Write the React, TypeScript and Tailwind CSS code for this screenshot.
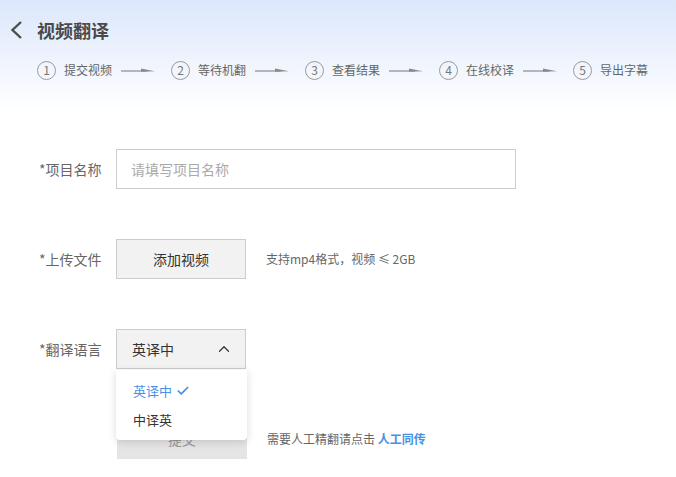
import { Check, ChevronUp } from 'lucide-react';

const steps = ['提交视频', '等待机翻', '查看结果', '在线校译', '导出字幕'];

function StepArrow() {
  return (
    <svg width="34" height="8" viewBox="0 0 34 8" className="shrink-0" aria-hidden="true">
      <line x1="0" y1="5" x2="26" y2="5" stroke="#8a8a8a" strokeWidth="1.2" />
      <polygon points="20,2.5 34,5.2 20,5.8" fill="#8a8a8a" />
    </svg>
  );
}

function Label({ children }: { children: React.ReactNode }) {
  return <div className="w-[77px] shrink-0 text-[14px] text-[#666]">{children}</div>;
}

export default function App() {
  return (
    <div
      className="w-[676px] h-[477px] overflow-hidden bg-white"
      style={{ fontFamily: '"Noto Sans CJK SC", "Noto Sans", sans-serif' }}
    >
      {/* Header */}
      <div className="h-[110px] bg-gradient-to-b from-[#dbe7fb] to-white pt-[20px]">
        <div className="flex items-center h-[20px]">
          <svg width="14" height="20" viewBox="0 0 14 20" className="ml-[9px]" aria-hidden="true">
            <polyline points="12,2 3.5,10 12,18" fill="none" stroke="#4d4d4d" strokeWidth="2.4" />
          </svg>
          <h1 className="ml-[14px] text-[18px] leading-[20px] font-bold text-[#4a4a4a]">视频翻译</h1>
        </div>
        <div className="flex items-center h-[20px] mt-[20px] ml-[37px]">
          {steps.map((s, i) => (
            <div key={s} className="flex items-center">
              <div className="w-[19px] h-[19px] rounded-full border border-[#9a9a9a] flex items-center justify-center text-[12px] leading-none text-[#777]">
                {i + 1}
              </div>
              <span className="ml-[8px] text-[12px] text-[#666] whitespace-nowrap">{s}</span>
              {i < steps.length - 1 && (
                <div className="flex items-center ml-[9px] mr-[16px]">
                  <StepArrow />
                </div>
              )}
            </div>
          ))}
        </div>
      </div>

      {/* Form */}
      <div className="pt-[39px] pl-[39px] flex flex-col gap-[50px]">
        <div className="flex items-center h-[40px]">
          <Label>*项目名称</Label>
          <input
            className="w-[400px] h-[40px] border border-[#ccc] px-[14px] text-[14px] text-[#333] placeholder:text-[#aaa] outline-none"
            placeholder="请填写项目名称"
          />
        </div>

        <div className="flex items-center h-[40px]">
          <Label>*上传文件</Label>
          <button className="w-[130px] h-[40px] bg-[#f2f2f2] border border-[#ccc] text-[14px] text-[#333]">
            添加视频
          </button>
          <span className="ml-[20px] text-[12px] text-[#666]">支持mp4格式，视频 ≤ 2GB</span>
        </div>

        <div className="flex items-center h-[40px]">
          <Label>*翻译语言</Label>
          <div className="relative">
            <div className="w-[130px] h-[40px] bg-[#f2f2f2] border border-[#ccc] flex items-center justify-between pl-[15px] pr-[12px] text-[14px] text-[#333]">
              <span>英译中</span>
              <ChevronUp className="w-[18px] h-[18px] text-[#333]" strokeWidth={1.6} />
            </div>
            <div className="absolute z-10 left-0 top-[41px] w-[131px] h-[70px] bg-white rounded-b-[4px] shadow-[0_2px_8px_rgba(0,0,0,0.15)] pt-[6px]">
              <div className="h-[29px] flex items-center pl-[17px] text-[13px] text-[#4a8fe6]">
                英译中
                <Check className="ml-[4px] w-[14px] h-[14px]" strokeWidth={3} />
              </div>
              <div className="h-[29px] flex items-center pl-[17px] text-[13px] text-[#333]">中译英</div>
            </div>
          </div>
        </div>

        <div className="flex items-center h-[40px]">
          <div className="w-[78px] shrink-0" />
          <button className="w-[130px] h-[40px] bg-[#e5e5e5] text-[14px] text-[#999]">提交</button>
          <span className="ml-[20px] text-[12px] text-[#666]">
            需要人工精翻请点击 <span className="font-bold text-[#4a8fe6]">人工同传</span>
          </span>
        </div>
      </div>
    </div>
  );
}
